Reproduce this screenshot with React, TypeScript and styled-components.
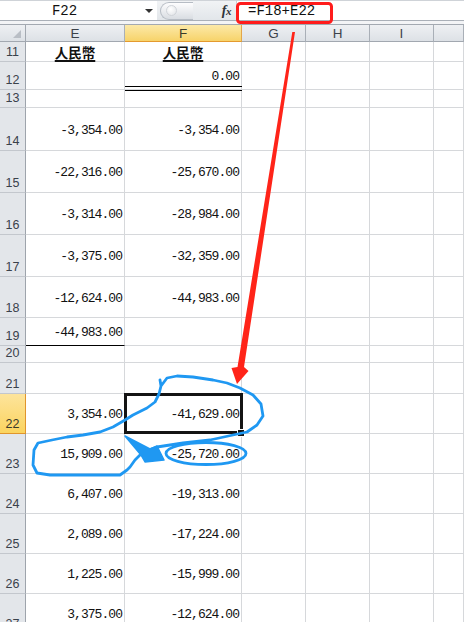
import React from "react";
import styled, { createGlobalStyle, css } from "styled-components";

const GlobalStyle = createGlobalStyle`
  html, body { margin: 0; padding: 0; background: #ffffff; overflow: hidden; }
  * { box-sizing: border-box; }
`;

const MONO = `"Liberation Mono", "DejaVu Sans Mono", monospace`;
const SANS = `"Liberation Sans", Arial, sans-serif`;
const CJK = `"Noto Sans CJK TC", "Noto Sans CJK SC", sans-serif`;

const Page = styled.div`
  position: relative;
  width: 464px;
  height: 622px;
  overflow: hidden;
  background: #ffffff;
  font-family: ${SANS};
`;

const FormulaBar = styled.div`
  display: flex;
  height: 21px;
  border-top: 1px solid #cfd3d8;
  border-bottom: 1px solid #aab0b8;
  background: #ffffff;
`;

const NameBox = styled.div`
  width: 157px;
  display: flex;
  align-items: center;
  padding-right: 2px;
`;

const NameText = styled.div`
  flex: 1;
  text-align: center;
  padding-right: 16px;
  padding-top: 1px;
  font-family: ${MONO};
  font-size: 14px;
  color: #111;
`;

const DropArrow = styled.div`
  width: 0;
  height: 0;
  border-left: 4px solid transparent;
  border-right: 4px solid transparent;
  border-top: 4px solid #333;
  margin-right: 2px;
  margin-top: 1px;
`;

const SplitZone = styled.div`
  width: 79px;
  display: flex;
  align-items: center;
  background: linear-gradient(#f1f3f5, #e2e6ea);
  padding-left: 3px;
  padding-right: 5px;
`;

const Pill = styled.div`
  width: 33px;
  height: 18px;
  border: 1px solid #b6bcc4;
  border-right: none;
  border-radius: 9px 0 0 9px;
  background: linear-gradient(#fdfdfe, #d9dde2);
  display: flex;
  align-items: center;
  padding-left: 5px;
`;

const PillDot = styled.div`
  width: 11px;
  height: 11px;
  border-radius: 50%;
  background: radial-gradient(circle at 40% 35%, #ffffff, #dfe2e6);
  border: 1px solid #d0d4d9;
`;

const FxLabel = styled.div`
  margin-left: auto;
  font-family: "Liberation Serif", "DejaVu Serif", serif;
  font-style: italic;
  font-weight: 700;
  font-size: 14px;
  color: #2e3338;
  letter-spacing: -0.5px;
  span { font-size: 11px; }
`;

const FormulaInput = styled.div`
  flex: 1;
  display: flex;
  align-items: center;
  padding-left: 11px;
  padding-top: 1px;
  border-left: 1px solid #c9ced4;
  font-family: ${MONO};
  font-size: 14px;
  color: #111;
`;

const Strip = styled.div`
  height: 4px;
  background: #f3f4f6;
  border-bottom: 1px solid #a3a9b1;
`;

const ROW_HEIGHTS = [17, 20, 28, 18, 43, 42, 42, 42, 41, 28, 17, 31, 40, 40, 40, 40, 40, 40];

const Sheet = styled.div`
  display: grid;
  grid-template-columns: 26px 99px 117px 64px 64px 64px 30px;
  grid-template-rows: ${ROW_HEIGHTS.map((h) => `${h}px`).join(" ")};
`;

const Corner = styled.div`
  position: relative;
  background: linear-gradient(#eef0f3, #dde1e6);
  border-right: 1px solid #a2a8b0;
  border-bottom: 1px solid #a2a8b0;
  &::after {
    content: "";
    position: absolute;
    right: 4px;
    bottom: 3px;
    width: 0;
    height: 0;
    border-left: 8px solid transparent;
    border-bottom: 8px solid #b9bec5;
  }
`;

const ColHead = styled.div<{ $active?: boolean }>`
  display: flex;
  align-items: center;
  justify-content: center;
  font-family: ${SANS};
  font-size: 13.5px;
  color: #3c424a;
  padding-top: 1px;
  border-right: 1px solid #a9afb7;
  border-bottom: 1px solid #a2a8b0;
  background: linear-gradient(#eef0f3, #dde1e6);
  ${(p) =>
    p.$active &&
    css`
      background: linear-gradient(#fce9a8, #f7d36a);
      border-right-color: #e3a64a;
      border-bottom: 1px solid #e49a2e;
      color: #3a3a2a;
    `}
`;

const RowHead = styled.div<{ $active?: boolean }>`
  display: flex;
  align-items: flex-end;
  justify-content: center;
  padding-bottom: 2px;
  font-family: ${SANS};
  font-size: 12.5px;
  color: #3a414a;
  background: #e3e6ea;
  border-right: 1px solid #9ea4ac;
  border-bottom: 1px solid #c3c7cd;
  ${(p) =>
    p.$active &&
    css`
      background: linear-gradient(#fde49c, #fbd45f);
      border-right-color: #e0952c;
      border-bottom-color: #e0952c;
      color: #3a3a2a;
    `}
`;

const Cell = styled.div<{
  $kind?: "num" | "title" | "empty";
  $selected?: boolean;
  $double?: boolean;
  $rule?: boolean;
}>`
  position: relative;
  display: flex;
  align-items: center;
  justify-content: flex-end;
  padding: 2px 2px 0 0;
  border-right: 1px solid #d6d8db;
  border-bottom: 1px solid #d6d8db;
  font-family: ${MONO};
  font-size: 13px;
  letter-spacing: -0.95px;
  color: #111;
  white-space: nowrap;
  ${(p) =>
    p.$kind === "title" &&
    css`
      justify-content: center;
      padding: 0;
      font-family: ${CJK};
      font-weight: 700;
      font-size: 13.5px;
      letter-spacing: 0;
      text-decoration: underline;
      text-underline-offset: 2px;
      text-decoration-thickness: 1.5px;
    `}
  ${(p) =>
    p.$rule &&
    css`
      border-bottom: 1px solid #000;
    `}
  ${(p) =>
    p.$double &&
    css`
      &::after {
        content: "";
        position: absolute;
        left: 0;
        right: -1px;
        bottom: -2px;
        height: 3px;
        border-top: 1px solid #000;
        border-bottom: 1px solid #000;
        z-index: 2;
      }
    `}
  ${(p) =>
    p.$selected &&
    css`
      &::after {
        content: "";
        position: absolute;
        left: -1px;
        top: -1px;
        right: -2px;
        bottom: -1px;
        border: 3px solid #141414;
        z-index: 3;
      }
      &::before {
        content: "";
        position: absolute;
        right: -4px;
        bottom: -4px;
        width: 6px;
        height: 6px;
        background: #141414;
        border: 1px solid #ffffff;
        z-index: 4;
      }
    `}
`;

const Overlay = styled.svg`
  position: absolute;
  left: 0;
  top: 0;
  width: 464px;
  height: 622px;
  pointer-events: none;
  z-index: 20;
`;

type Row = {
  n: number;
  e?: string;
  f?: string;
  title?: boolean;
  fDouble?: boolean;
  eRule?: boolean;
  active?: boolean;
};

const rows: Row[] = [
  { n: 11, e: "人民幣", f: "人民幣", title: true },
  { n: 12, f: "0.00", fDouble: true },
  { n: 13 },
  { n: 14, e: "-3,354.00", f: "-3,354.00" },
  { n: 15, e: "-22,316.00", f: "-25,670.00" },
  { n: 16, e: "-3,314.00", f: "-28,984.00" },
  { n: 17, e: "-3,375.00", f: "-32,359.00" },
  { n: 18, e: "-12,624.00", f: "-44,983.00" },
  { n: 19, e: "-44,983.00", eRule: true },
  { n: 20 },
  { n: 21 },
  { n: 22, e: "3,354.00", f: "-41,629.00", active: true },
  { n: 23, e: "15,909.00", f: "-25,720.00" },
  { n: 24, e: "6,407.00", f: "-19,313.00" },
  { n: 25, e: "2,089.00", f: "-17,224.00" },
  { n: 26, e: "1,225.00", f: "-15,999.00" },
  { n: 27, e: "3,375.00", f: "-12,624.00" },
];

const columns = ["E", "F", "G", "H", "I", ""];

const blobPath =
  "M127,470 L120,475 L50,475 L37,473 L33,465 L34,450 L38,443 L52,440 L67,437 L83,435 L100,432 L113,427 L125,420 L133,415 L147,408 L155,402 L159,394 L161,386 L160,380 M161,386 L167,378 L177,376 L193,377 L213,380 L227,383 L240,388 L253,395 L261,404 L263,416 L257,425 L247,432 L233,435 L210,440 L183,443 L157,447 L143,452 L135,460 L130,467 L127,470";

export default function App() {
  return (
    <Page>
      <GlobalStyle />
      <FormulaBar>
        <NameBox>
          <NameText>F22</NameText>
          <DropArrow />
        </NameBox>
        <SplitZone>
          <Pill>
            <PillDot />
          </Pill>
          <FxLabel>
            f<span>x</span>
          </FxLabel>
        </SplitZone>
        <FormulaInput>=F18+E22</FormulaInput>
      </FormulaBar>
      <Strip />
      <Sheet>
        <Corner />
        {columns.map((c) => (
          <ColHead key={c || "J"} $active={c === "F"}>
            {c}
          </ColHead>
        ))}
        {rows.map((r) => (
          <React.Fragment key={r.n}>
            <RowHead $active={r.active}>{r.n}</RowHead>
            <Cell $kind={r.title ? "title" : "num"} $rule={r.eRule}>
              {r.e}
            </Cell>
            <Cell
              $kind={r.title ? "title" : "num"}
              $double={r.fDouble}
              $selected={r.active}
            >
              {r.f}
            </Cell>
            <Cell />
            <Cell />
            <Cell />
            <Cell />
          </React.Fragment>
        ))}
      </Sheet>
      <Overlay viewBox="0 0 464 622">
        <rect
          x="237.5"
          y="3.5"
          width="94"
          height="19"
          rx="3"
          fill="none"
          stroke="#ff1c1c"
          strokeWidth="3"
        />
        <polygon
          points="292.3,32 295,32 244,367 248.5,371 237,384 231.5,368 237.5,367"
          fill="#ff2419"
        />
        <path
          d={blobPath}
          fill="none"
          stroke="#1f98f2"
          strokeWidth="2.8"
          strokeLinejoin="round"
          strokeLinecap="round"
        />
        <polygon
          points="125,436 150,449 157,446 164,460 145,462 141,455"
          fill="#1f98f2"
          stroke="#1f98f2"
          strokeWidth="1.5"
          strokeLinejoin="round"
        />
        <ellipse
          cx="206"
          cy="453.5"
          rx="40"
          ry="11"
          fill="none"
          stroke="#1f98f2"
          strokeWidth="2.8"
        />
      </Overlay>
    </Page>
  );
}
